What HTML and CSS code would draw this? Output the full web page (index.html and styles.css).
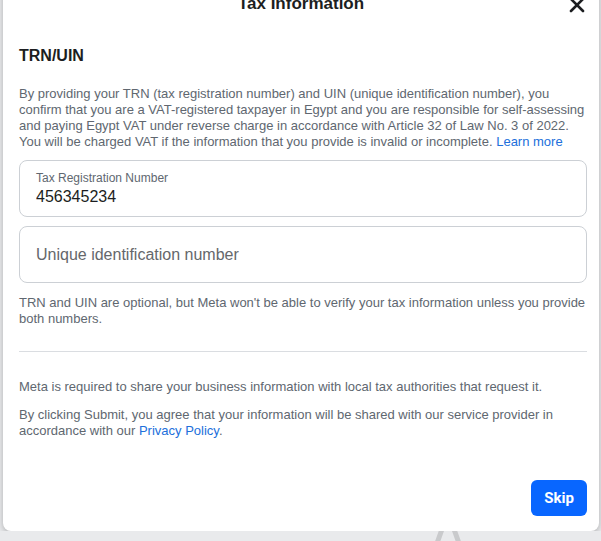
FILE: index.html
```html
<!DOCTYPE html>
<html lang="en">
<head>
    <meta charset="UTF-8">
    <meta name="viewport" content="width=device-width, initial-scale=1.0">
    <title>Tax Information</title>
    <link rel="stylesheet" href="styles.css">
</head>
<body>

    <div class="backdrop-art">
        <svg width="40" height="30" viewBox="0 0 40 30">
            <path d="M6 30 L16 2 M20 2 L30 30" stroke="#c9cacc" stroke-width="5" fill="none"/>
        </svg>
    </div>

    <div class="dialog">
        <div class="dialog-header">
            <h1>Tax Information</h1>
            <button class="close-btn" type="button" aria-label="Close">
                <svg width="16" height="16" viewBox="0 0 16 16">
                    <path d="M2 2 L14 14 M14 2 L2 14" stroke="#1c1e21" stroke-width="2.6" stroke-linecap="round"/>
                </svg>
            </button>
        </div>

        <div class="dialog-body">
            <h2>TRN/UIN</h2>
            <p class="intro">
                By providing your TRN (tax registration number) and UIN (unique identification number), you
                confirm that you are a VAT-registered taxpayer in Egypt and you are responsible for self-assessing
                and paying Egypt VAT under reverse charge in accordance with Article 32 of Law No. 3 of 2022.
                You will be charged VAT if the information that you provide is invalid or incomplete.
                <a href="#">Learn more</a>
            </p>

            <div class="field filled">
                <label for="trn">Tax Registration Number</label>
                <input type="text" id="trn" name="trn" value="456345234">
            </div>
            <div class="field">
                <input type="text" id="uin" name="uin" placeholder="Unique identification number">
            </div>

            <p class="note">TRN and UIN are optional, but Meta won't be able to verify your tax information unless you provide both numbers.</p>

            <hr>

            <p class="legal">Meta is required to share your business information with local tax authorities that request it.</p>
            <p class="legal">By clicking Submit, you agree that your information will be shared with our service provider in accordance with our <a href="#">Privacy Policy</a>.</p>
        </div>

        <div class="dialog-footer">
            <button class="skip-btn" type="button">Skip</button>
        </div>
    </div>

</body>
</html>
```

FILE: styles.css
```css
body {
    font-family: "Liberation Sans", Arial, sans-serif;
    background-color: #e9eaec;
    margin: 0;
    padding: 0;
    overflow: hidden;
}

.backdrop-art {
    position: absolute;
    left: 430px;
    top: 516px;
}

.dialog {
    position: relative;
    margin: -23px 0 0 3px;
    width: 596px;
    background-color: white;
    border-radius: 8px;
    box-shadow: 0 2px 6px rgba(0, 0, 0, 0.25);
}

.dialog-header {
    height: 54px;
    display: flex;
    align-items: center;
    justify-content: center;
    position: relative;
}

.dialog-header h1 {
    margin: 0;
    font-size: 17px;
    font-weight: bold;
    color: #1c1e21;
}

.close-btn {
    position: absolute;
    right: 14px;
    top: 20px;
    background: none;
    border: none;
    padding: 0;
    width: 16px;
    height: 16px;
}

.dialog-body {
    padding: 0 12px 0 16px;
}

h2 {
    margin: 15px 0 0;
    font-size: 16px;
    line-height: 20px;
    font-weight: bold;
    color: #1c1e21;
}

p {
    margin: 0;
    font-size: 13px;
    line-height: 16px;
    color: #606770;
}

a {
    color: #216fdb;
    text-decoration: none;
}

.intro {
    margin-top: 20px;
    margin-bottom: 10px;
}

.field {
    border: 1px solid #ccd0d5;
    border-radius: 8px;
    height: 55px;
    padding: 0 16px;
    display: flex;
    flex-direction: column;
    justify-content: center;
    margin-bottom: 9px;
}

.field label {
    font-size: 12px;
    line-height: 14px;
    color: #606770;
}

.field input {
    border: none;
    outline: none;
    padding: 0;
    font-family: "Liberation Sans", Arial, sans-serif;
    font-size: 16px;
    line-height: 20px;
    color: #1c1e21;
}

.field.filled input {
    margin-top: 2px;
}

.field input::placeholder {
    color: #65676b;
}

.note {
    margin-top: 12px;
}

hr {
    border: none;
    border-top: 1px solid #dadde1;
    margin: 24px 0 27px;
}

.legal {
    margin-bottom: 12px;
}

.dialog-footer {
    display: flex;
    justify-content: flex-end;
    padding: 29px 12px 15px;
}

.skip-btn {
    background-color: #0866ff;
    color: white;
    border: none;
    border-radius: 6px;
    height: 36px;
    width: 56px;
    font-family: Roboto, "Liberation Sans", sans-serif;
    font-size: 15px;
    font-weight: bold;
}
```
